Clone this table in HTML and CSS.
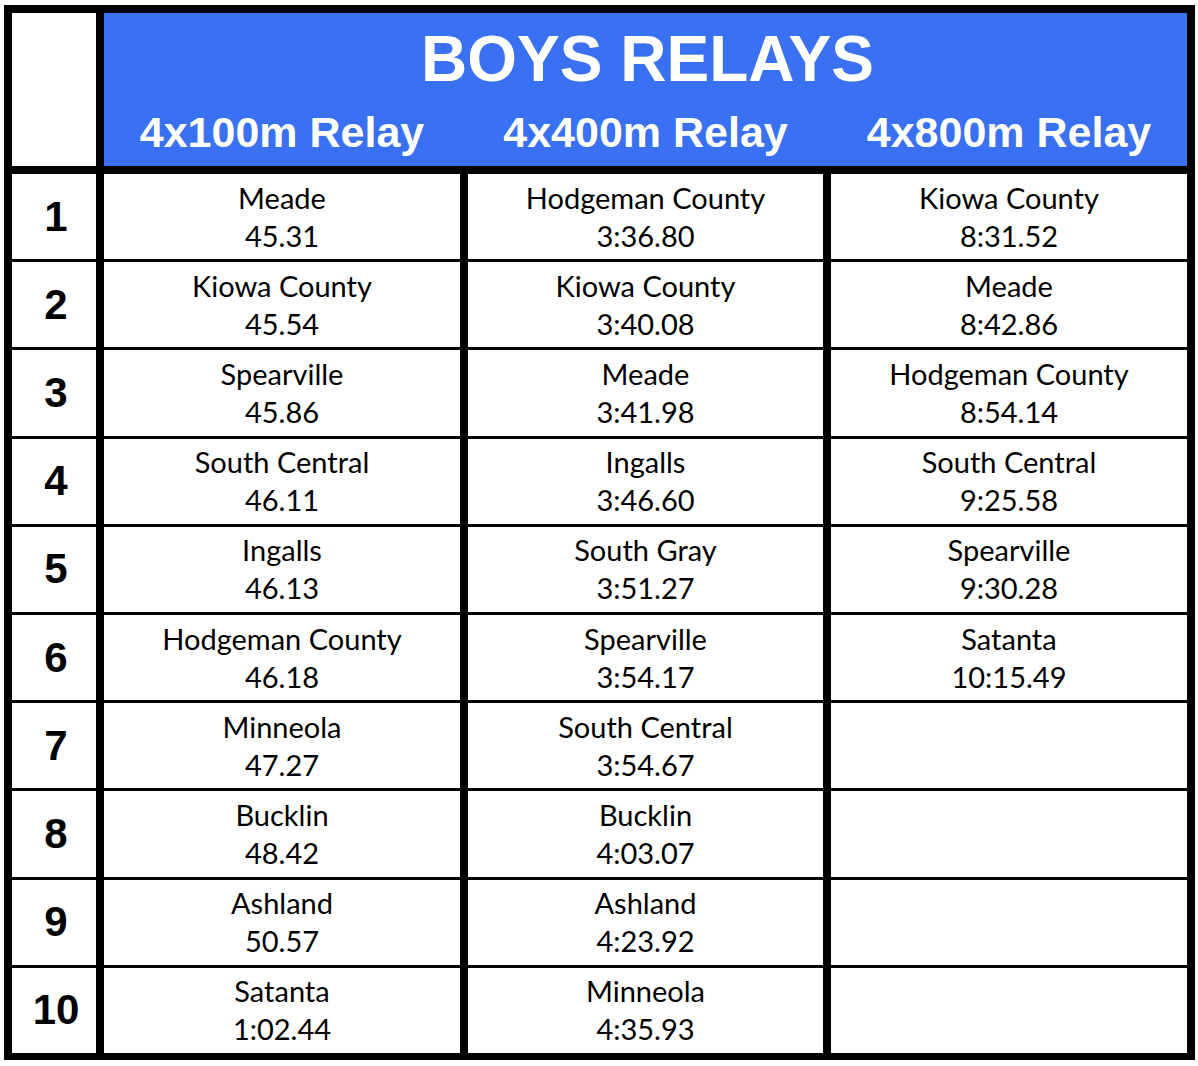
FILE: index.html
```html
<!DOCTYPE html>
<html lang="en">
<head>
<meta charset="utf-8">
<title>Boys Relays</title>
<link rel="stylesheet" href="styles.css">
</head>
<body>
<div class="board">
  <div class="head">
    <div class="corner"></div>
    <div class="banner">
      <h1 class="title">BOYS RELAYS</h1>
      <div class="events">
        <div class="event">4x100m Relay</div>
        <div class="event">4x400m Relay</div>
        <div class="event">4x800m Relay</div>
      </div>
    </div>
  </div>
  <div class="grid">
    <div class="rank">1</div>
    <div class="cell"><span>Meade</span><span>45.31</span></div>
    <div class="cell"><span>Hodgeman County</span><span>3:36.80</span></div>
    <div class="cell"><span>Kiowa County</span><span>8:31.52</span></div>

    <div class="rank">2</div>
    <div class="cell"><span>Kiowa County</span><span>45.54</span></div>
    <div class="cell"><span>Kiowa County</span><span>3:40.08</span></div>
    <div class="cell"><span>Meade</span><span>8:42.86</span></div>

    <div class="rank">3</div>
    <div class="cell"><span>Spearville</span><span>45.86</span></div>
    <div class="cell"><span>Meade</span><span>3:41.98</span></div>
    <div class="cell"><span>Hodgeman County</span><span>8:54.14</span></div>

    <div class="rank">4</div>
    <div class="cell"><span>South Central</span><span>46.11</span></div>
    <div class="cell"><span>Ingalls</span><span>3:46.60</span></div>
    <div class="cell"><span>South Central</span><span>9:25.58</span></div>

    <div class="rank">5</div>
    <div class="cell"><span>Ingalls</span><span>46.13</span></div>
    <div class="cell"><span>South Gray</span><span>3:51.27</span></div>
    <div class="cell"><span>Spearville</span><span>9:30.28</span></div>

    <div class="rank">6</div>
    <div class="cell"><span>Hodgeman County</span><span>46.18</span></div>
    <div class="cell"><span>Spearville</span><span>3:54.17</span></div>
    <div class="cell"><span>Satanta</span><span>10:15.49</span></div>

    <div class="rank">7</div>
    <div class="cell"><span>Minneola</span><span>47.27</span></div>
    <div class="cell"><span>South Central</span><span>3:54.67</span></div>
    <div class="cell"></div>

    <div class="rank">8</div>
    <div class="cell"><span>Bucklin</span><span>48.42</span></div>
    <div class="cell"><span>Bucklin</span><span>4:03.07</span></div>
    <div class="cell"></div>

    <div class="rank">9</div>
    <div class="cell"><span>Ashland</span><span>50.57</span></div>
    <div class="cell"><span>Ashland</span><span>4:23.92</span></div>
    <div class="cell"></div>

    <div class="rank">10</div>
    <div class="cell"><span>Satanta</span><span>1:02.44</span></div>
    <div class="cell"><span>Minneola</span><span>4:35.93</span></div>
    <div class="cell"></div>
  </div>
</div>
</body>
</html>
```
FILE: styles.css
```css
html, body {
  margin: 0;
  padding: 0;
  background: #ffffff;
}

.board {
  margin: 5px 0 0 4px;
  width: 1175px;
  padding: 8px 8px 7px 8px;
  background: #000000;
}

.head {
  display: flex;
  gap: 8px;
  height: 153px;
}

.corner {
  width: 84px;
  background: #ffffff;
}

.banner {
  flex: 1;
  background: #3a70f2;
  color: #ffffff;
  font-family: "Liberation Sans", Arial, sans-serif;
  font-weight: bold;
  padding-top: 13px;
  box-sizing: border-box;
}

.title {
  margin: 0;
  font-size: 64px;
  line-height: 66px;
  font-weight: bold;
  text-align: center;
  padding-left: 4px;
}

.events {
  display: grid;
  grid-template-columns: 356px 355px 356px;
  column-gap: 8px;
  margin-top: 19px;
}

.event {
  font-size: 43px;
  line-height: 43px;
  text-align: center;
}

.grid {
  margin-top: 8px;
  display: grid;
  grid-template-columns: 84px 356px 355px 356px;
  column-gap: 8px;
  row-gap: 3px;
  grid-template-rows: repeat(10, 1fr);
  height: 879px;
}

.rank {
  background: #ffffff;
  display: flex;
  align-items: center;
  justify-content: center;
  padding-left: 4px;
  font-family: "Liberation Sans", Arial, sans-serif;
  font-weight: bold;
  font-size: 42px;
  color: #000000;
}

.cell {
  background: #ffffff;
  display: flex;
  flex-direction: column;
  align-items: center;
  justify-content: center;
  font-family: Lato, "Open Sans", sans-serif;
  font-size: 29px;
  line-height: 38px;
  color: #000000;
}
```
